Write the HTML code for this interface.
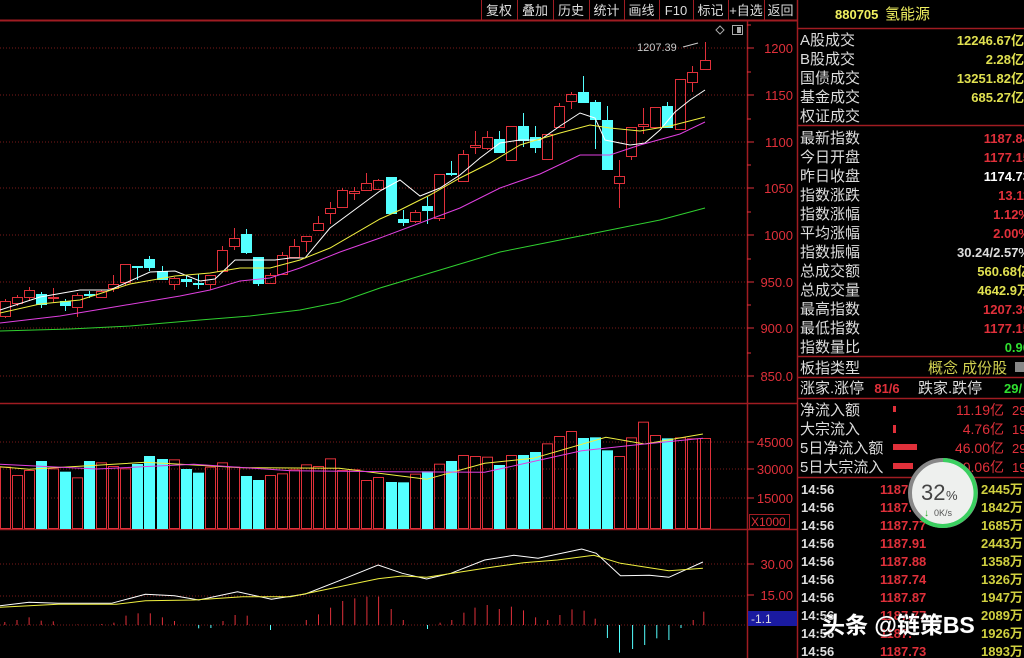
<!DOCTYPE html>
<html><head><meta charset="utf-8">
<style>
html,body{margin:0;padding:0;background:#000;width:1024px;height:658px;overflow:hidden}
body{position:relative;font-family:"Liberation Sans","Noto Sans CJK SC",sans-serif}
svg{position:absolute;left:0;top:0}
.t{font-family:"Liberation Sans","Noto Sans CJK SC",sans-serif}
</style></head><body>
<svg id="s" width="1024" height="658" viewBox="0 0 1024 658" xmlns="http://www.w3.org/2000/svg"></svg>
<script>
var S=document.getElementById('s');var h='';
function L(x1,y1,x2,y2,c,w,d){h+='<line x1="'+x1+'" y1="'+y1+'" x2="'+x2+'" y2="'+y2+'" stroke="'+c+'" stroke-width="'+(w||1)+'"'+(d?' stroke-dasharray="'+d+'"':'')+'/>';}
function T(x,y,s,c,sz,a,extra){h+='<text class="t" x="'+x+'" y="'+y+'" fill="'+c+'" font-size="'+(sz||14)+'"'+(a?' text-anchor="'+a+'"':'')+(extra||'')+'>'+s+'</text>';}
function P(pts,c,w){h+='<polyline fill="none" stroke="'+c+'" stroke-width="'+(w||1)+'" points="'+pts.map(function(p){return p.join(',')}).join(' ')+'"/>';}
var R='#e0303a',RL='#a01c22',CY='#54ffff',Y='#e0e050';
// grid
[48,95,142,188,235,282,328,376].forEach(function(y){L(0,y,746,y,'#7a1a1a',1,'1,2');});
[442,469,498].forEach(function(y){L(0,y,746,y,'#7a1a1a',1,'1,2');});
[564,596].forEach(function(y){L(0,y,746,y,'#7a1a1a',1,'1,2');});
L(0,625,746,625,'#7a1a1a',1,'1,2');
// frame
L(0,20.5,797,20.5,RL,2);L(0,403.5,797,403.5,RL,1.5);L(0,529.5,797,529.5,RL,1.5);
L(747.5,20,747.5,658,RL,1.5);L(797.5,0,797.5,658,RL,1.5);
// axis ticks
var labs=[[48,'1200'],[95,'1150'],[142,'1100'],[188,'1050'],[235,'1000'],[282,'950.0'],[328,'900.0'],[376,'850.0']];
labs.forEach(function(l){L(747,l[0],754,l[0],R);L(747,l[0]-23,751,l[0]-23,R);T(793,l[0]+5,l[1],R,13,'end');});
[[442,'45000'],[469,'30000'],[498,'15000']].forEach(function(l){L(747,l[0],754,l[0],R);T(793,l[0]+5,l[1],R,13,'end');});
h+='<rect x="749.5" y="514.5" width="40" height="14" fill="none" stroke="'+RL+'"/>';T(751,526,'X1000',R,12);
[[564,'30.00'],[595,'15.00']].forEach(function(l){L(747,l[0],754,l[0],R);T(793,l[0]+5,l[1],R,13,'end');});
h+='<rect x="748" y="611" width="49" height="15" fill="#1a1aa0"/>';T(751,623,'-1.1','#ddd',12);
// candles: x, hi, top, bot, lo, color(1 red,0 cyan)
var C=[[5,299,301,316,318,1],[17,295,297,303,306,1],[29,287,290,297,301,1],[41,292,294,304,308,0],[53,288,297,298,303,1],[65,299,301,305,311,0],[77,293,295,307,317,1],[89,291,294,295,298,0],[101,290,291,297,298,1],[113,275,284,288,292,1],[125,264,264,282,285,1],[137,266,266,267,280,0],[149,256,259,267,271,0],[162,266,271,279,280,0],[174,277,278,284,290,1],[186,275,279,281,287,0],[198,274,283,284,289,0],[210,275,275,284,290,1],[222,246,250,271,271,1],[234,228,238,246,250,1],[246,229,234,252,254,0],[258,257,257,283,286,0],[270,273,275,283,284,1],[282,252,255,274,275,1],[294,239,246,257,257,1],[306,236,236,241,252,1],[318,216,223,230,230,1],[330,202,208,213,224,1],[342,188,190,207,207,1],[354,187,191,193,200,1],[366,173,183,190,190,1],[378,179,180,189,189,1],[391,177,177,213,213,0],[403,210,219,222,226,0],[415,210,212,221,223,1],[427,197,206,210,224,0],[439,174,174,218,221,1],[451,161,173,174,176,0],[463,150,154,181,181,1],[475,131,145,147,154,1],[487,131,137,148,150,1],[499,131,139,152,152,0],[511,126,126,160,160,1],[523,113,126,140,147,0],[535,126,137,147,153,0],[547,134,134,159,159,1],[559,103,106,127,127,1],[571,92,94,101,109,1],[583,76,92,102,102,0],[595,100,102,119,149,0],[607,106,120,169,169,0],[619,160,176,183,208,1],[631,127,127,156,160,1],[643,108,124,126,134,1],[655,107,107,127,127,1],[667,102,106,127,127,0],[680,79,79,129,129,1],[692,66,72,82,92,1],[705,42,60,69,69,1]];
C.forEach(function(c){var x=c[0],col=c[5]?R:CY;L(x+.5,c[1],x+.5,c[2],col);L(x+.5,c[3],x+.5,c[4],col);
 var ht=Math.max(c[3]-c[2],1);
 if(c[5]){h+='<rect x="'+(x-5)+'.5" y="'+(c[2]+.5)+'" width="10" height="'+ht+'" fill="none" stroke="'+R+'"/>';}
 else{h+='<rect x="'+(x-5)+'" y="'+c[2]+'" width="11" height="'+(ht+1)+'" fill="'+CY+'"/>';}});
// MAs
P([[0,310],[40,297],[80,290],[110,290],[150,272],[175,271],[200,281],[215,279],[235,260],[250,260],[275,260],[290,258],[305,258],[330,228],[380,191],[400,180],[420,196],[440,188],[460,175],[480,158],[500,143],[520,140],[540,140],[560,126],[580,113],[595,118],[605,140],[630,145],[645,143],[660,130],[675,112],[690,100],[705,90]],'#fff');
P([[0,313],[40,304],[80,300],[130,284],[175,276],[210,273],[240,268],[270,268],[300,260],[330,248],[380,219],[400,210],[430,195],[460,178],[490,163],[520,145],[560,133],[590,125],[610,128],[640,131],[670,126],[705,117]],'#f0f040');
P([[0,323],[60,316],[120,306],[180,296],[210,290],[240,281],[270,278],[300,268],[340,252],[380,238],[420,223],[460,208],[500,188],[540,174],[580,155],[610,155],[640,145],[680,134],[705,122]],'#e040e0');
P([[0,331],[70,329],[130,326],[200,320],[250,316],[300,310],[340,302],[380,288],[420,276],[460,264],[500,252],[540,244],[580,236],[620,228],[660,220],[705,208]],'#30d030');
T(637,51,'1207.39','#ccc',11);L(683,47,698,43,'#ccc');
h+='<path d="M716 30 l4 -4 l4 4 l-4 4z" fill="none" stroke="#aaa"/><rect x="732.5" y="25.5" width="10" height="9" fill="none" stroke="#aaa"/><rect x="737" y="27" width="4" height="6" fill="#aaa"/>';
// volume
var V=[110,135,120,93,115,125,142,93,97,108,115,102,78,87,88,117,128,110,97,110,138,150,135,130,118,103,108,85,120,118,150,141,156,157,131,124,101,93,75,78,80,105,75,75,66,40,18,3,24,22,61,78,22,-25,15,25,22,25,24];
C.forEach(function(c,i){var top=V[i]/3+430;var x=c[0]-5;
 if(c[5])h+='<rect x="'+x+'.5" y="'+(top+.5)+'" width="10" height="'+(528-top)+'" fill="none" stroke="'+R+'"/>';
 else h+='<rect x="'+x+'" y="'+top+'" width="11" height="'+(529-top)+'" fill="'+CY+'"/>';});
function Z(a){return a.map(function(p){return [(p[0]/2.063).toFixed(1),(p[1]/3+430).toFixed(1)]});}
P(Z([[0,110],[60,118],[300,97],[500,113],[700,115],[880,148],[1000,100],[1100,85],[1250,22],[1330,42],[1450,12]]),'#f0f040');
P(Z([[0,103],[200,117],[400,103],[600,122],[800,125],[1000,127],[1200,62],[1330,42],[1450,25]]),'#e040e0');
// indicator
var Hs=[[10,576],[35,570],[60,562],[85,572],[110,574],[160,584],[210,582],[235,578],[260,557],[285,550],[310,550],[335,562],[360,573],[460,573],[485,555],[510,557],[632,570],[657,553],[682,533],[707,513],[732,505],[757,500],[781,500],[807,537],[832,570],[908,578],[932,570],[957,548],[980,533],[1005,525],[1030,537],[1055,530],[1080,541],[1105,562],[1130,570],[1155,555],[1180,538],[1205,542],[1228,566],[1430,570],[1452,545]];
Hs.forEach(function(p){var x=(p[0]/2.063).toFixed(1);L(x,p[1]/3+430,x,625,R);});
[[410,595],[435,594],[558,600],[882,597],[1405,594]].forEach(function(p){var x=(p[0]/2.063).toFixed(1);L(x,625,x,p[1]/3+430,CY);});
[[1253,624],[1278,668],[1305,657],[1330,645],[1355,625],[1380,630]].forEach(function(p){var x=(p[0]/2.063).toFixed(1);L(x,625,x,p[1]/3+430,CY);});
P(Z([[0,527],[60,517],[120,520],[230,520],[300,493],[360,497],[410,510],[490,485],[560,508],[630,492],[700,452],[780,405],[830,430],[880,447],[930,430],[1000,390],[1060,376],[1110,385],[1200,357],[1230,370],[1280,437],[1340,436],[1380,442],[1450,396]]),'#fff');
P(Z([[0,532],[120,523],[240,523],[300,512],[400,510],[500,500],[600,500],[700,470],[780,446],[830,438],[880,442],[1000,415],[1080,398],[1150,390],[1225,376],[1280,400],[1380,422],[1450,415]]),'#f0f040');
// toolbar
var tb=['复权','叠加','历史','统计','画线','F10','标记','+自选','返回'];var tx=[481,517,553,589,624,659,693,728,764,797];
for(var i=0;i<9;i++){L(tx[i]+.5,0,tx[i]+.5,20,RL);T((tx[i]+tx[i+1])/2,15,tb[i],'#ddd',13,'middle');}
// right panel
T(835,19,'880705','#f0f060',13,null,' font-weight="bold"');T(885,19,'氢能源','#f0f060',15);
L(797,28.5,1024,28.5,RL,1.5);
var rows=[['A股成交','12246.67亿',Y],['B股成交','2.28亿',Y],['国债成交','13251.82亿',Y],['基金成交','685.27亿',Y],['权证成交','','']];
rows.forEach(function(r,i){var y=45+i*19;T(800,y,r[0],'#ddd',15);T(1024,y,r[1],r[2],13,'end',' font-weight="bold"');});
L(797,125.5,1024,125.5,RL,1.5);
var r2=[['最新指数','1187.84',R],['今日开盘','1177.15',R],['昨日收盘','1174.73','#fff'],['指数涨跌','13.11',R],['指数涨幅','1.12%',R],['平均涨幅','2.00%',R],['指数振幅','30.24/2.57%','#ddd'],['总成交额','560.68亿',Y],['总成交量','4642.9万',Y],['最高指数','1207.39',R],['最低指数','1177.15',R],['指数量比','0.90','#30e030']];
r2.forEach(function(r,i){var y=143+i*19;T(800,y,r[0],'#ddd',15);T(1030,y,r[1],r[2],13,'end',' font-weight="bold"');});
L(797,356.5,1024,356.5,RL,1.5);
T(800,373,'板指类型','#ddd',15);T(928,373,'概念 成份股','#d0d050',15);h+='<rect x="1015" y="362" width="9" height="10" fill="#888"/>';
L(797,377.5,1024,377.5,RL,1.5);
T(800,393,'涨家.涨停','#ddd',15);T(887,393,'81/6',R,13,'middle',' font-weight="bold"');T(918,393,'跌家.跌停','#ddd',15);T(1004,393,'29/','#30e030',13,null,' font-weight="bold"');
L(797,398.5,1024,398.5,RL,1.5);
var r3=[['净流入额','11.19亿',2,'29'],['大宗流入','4.76亿',1,'19'],['5日净流入额','46.00亿',24,'29'],['5日大宗流入','40.06亿',20,'19']];
r3.forEach(function(r,i){var y=415+i*19;T(800,y,r[0],'#ddd',15);h+='<rect x="893" y="'+(y-9)+'" width="'+Math.max(r[2],3)+'" height="'+(i==1?8:6)+'" fill="'+R+'"/>';T(1004,y,r[1],R,14,'end');T(1012,y,r[3],R,13);});
L(797,477.5,1024,477.5,RL,1.5);
var tp=['1187.','1187.','1187.77','1187.91','1187.88','1187.74','1187.87','1187.77','1187.','1187.73'],tv=['2445万','1842万','1685万','2443万','1358万','1326万','1947万','2089万','1926万','1893万'];
for(var i=0;i<10;i++){var y=494+i*18;T(801,y,'14:56','#ddd',13,null,' font-weight="bold"');T(880,y,tp[i],R,13,null,' font-weight="bold"');T(981,y,tv[i],'#d0d040',13,null,' font-weight="bold"');}
// overlay circle
h+='<circle cx="943" cy="493" r="33" fill="#eef0ee" stroke="#888" stroke-width="4"/>';
h+='<path d="M943 460 A33 33 0 1 1 921 518" fill="none" stroke="#3ad060" stroke-width="4"/>';
T(921,500,'32','#444',22);T(946,500,'%','#444',13);T(924,516,'↓','#2a2',10);T(934,516,'0K/s','#555',9);
// watermark
T(822,633,'头条 @链策BS','#fff',23,null,' font-weight="bold" stroke="#333" stroke-width="0.6" style="paint-order:stroke"');
S.innerHTML=h;
</script>
</body></html>
